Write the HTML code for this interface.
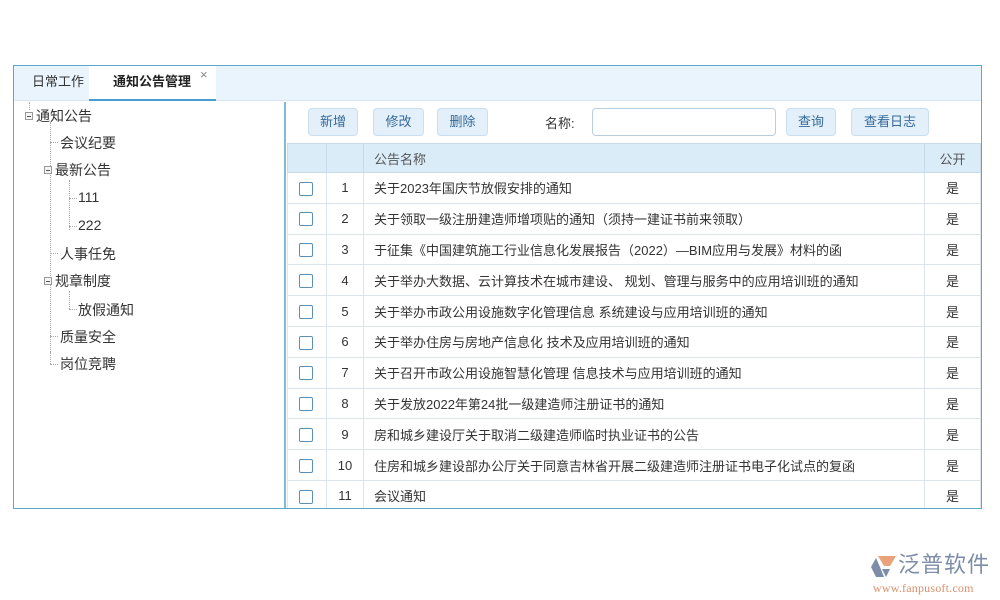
<!DOCTYPE html>
<html><head><meta charset="utf-8"><style>
*{margin:0;padding:0;box-sizing:border-box}
body{width:1000px;height:600px;background:#fff;font-family:"Liberation Sans","Noto Sans CJK SC",sans-serif;font-size:13px;color:#333;position:relative;overflow:hidden}
.box{position:absolute;left:13px;top:65px;width:969px;height:444px;border:1px solid #5aa9c9;overflow:hidden}
.tabs{position:absolute;left:0;top:0;width:967px;height:35px;background:#eaf4fc;border-bottom:1px solid #d7e6f2}
.tab{position:absolute;top:0;height:35px;line-height:31px;font-size:13px}
.t1{left:18px;color:#333}
.t2{left:75px;width:127px;background:#fff;border-bottom:2px solid #4a9bd0;padding-left:24px;color:#222;font-weight:bold;height:35px}
.t2 span{position:absolute;left:111px;top:-7px;color:#888;font-weight:normal;font-size:13px}
.tree{position:absolute;left:0;top:36px;width:272px;height:406px;border-right:2px solid #7fbbd8}
.node{position:absolute;font-size:14px;color:#333;white-space:nowrap}
.mi{display:inline-block;width:8px;height:8px;border:1px solid #999;position:relative;top:-1px;margin-right:3px;background:#f4f4f4}
.mi:after{content:"";position:absolute;left:1px;top:3px;width:4px;height:1px;background:#555}
.vl{position:absolute;border-left:1px dotted #aaa}
.hl{position:absolute;border-top:1px dotted #aaa;width:8px}
.right{position:absolute;left:273px;top:36px;width:694px;height:406px}
.btn{position:absolute;top:6px;height:28px;line-height:26px;border:1px solid #c9dff0;background:#e3eff9;border-radius:4px;color:#346a99;text-align:center;font-size:13px}
.input{position:absolute;left:305px;top:6px;width:184px;height:28px;border:1px solid #b8cfe2;border-radius:4px;background:#fff}
table{position:absolute;left:0;top:41px;width:694px;border-collapse:collapse;table-layout:fixed}
td,th{border:1px solid #dde5ec;padding:0;font-weight:normal;font-size:13px;white-space:nowrap;overflow:hidden}
th{background:#dbecf9;color:#555;border-color:#c8dcec}
td.n{text-align:center}
td.c span{display:inline-block;width:14px;height:14px;border:1px solid #5b8fb5;border-radius:2px;margin-left:11px;vertical-align:middle}
.nm{padding-left:10px}
.p{text-align:center}
tr{height:30.8px}
</style></head><body>
<div class="box">
<div class="tabs"><div class="tab t1">日常工作</div><div class="tab t2">通知公告管理<span>×</span></div></div>
<div class="tree">
<div class="vl" style="left:15px;top:0px;height:8px"></div>
<div class="node" style="left:11px;top:4px"><i class="mi"></i>通知公告</div>
<div class="vl" style="left:36px;top:20px;height:230px"></div>
<div class="hl" style="left:36px;top:40px"></div><div class="node" style="left:46px;top:31px">会议纪要</div>
<div class="node" style="left:30px;top:58px"><i class="mi"></i>最新公告</div>
<div class="vl" style="left:55px;top:78px;height:50px"></div>
<div class="hl" style="left:55px;top:96px"></div><div class="node" style="left:64px;top:87px">111</div>
<div class="hl" style="left:55px;top:124px"></div><div class="node" style="left:64px;top:115px">222</div>
<div class="hl" style="left:36px;top:151px"></div><div class="node" style="left:46px;top:142px">人事任免</div>
<div class="node" style="left:30px;top:169px"><i class="mi"></i>规章制度</div>
<div class="vl" style="left:55px;top:189px;height:18px"></div>
<div class="hl" style="left:55px;top:207px"></div><div class="node" style="left:64px;top:198px">放假通知</div>
<div class="hl" style="left:36px;top:234px"></div><div class="node" style="left:46px;top:225px">质量安全</div>
<div class="vl" style="left:36px;top:250px;height:12px"></div>
<div class="hl" style="left:36px;top:262px"></div><div class="node" style="left:46px;top:252px">岗位竞聘</div>
</div>
<div class="right">
<div class="btn" style="left:21px;width:50px">新增</div>
<div class="btn" style="left:86px;width:51px">修改</div>
<div class="btn" style="left:150px;width:51px">删除</div>
<div style="position:absolute;left:258px;top:11px">名称:</div>
<div class="input"></div>
<div class="btn" style="left:499px;width:50px">查询</div>
<div class="btn" style="left:564px;width:78px">查看日志</div>
<table>
<colgroup><col style="width:39px"><col style="width:37px"><col><col style="width:56px"></colgroup>
<tr style="height:29px"><th class="c"></th><th></th><th class="nm" style="text-align:left">公告名称</th><th class="p">公开</th></tr>
<tr><td class="c"><span></span></td><td class="n">1</td><td class="nm">关于2023年国庆节放假安排的通知</td><td class="p">是</td></tr>
<tr><td class="c"><span></span></td><td class="n">2</td><td class="nm">关于领取一级注册建造师增项贴的通知（须持一建证书前来领取）</td><td class="p">是</td></tr>
<tr><td class="c"><span></span></td><td class="n">3</td><td class="nm">于征集《中国建筑施工行业信息化发展报告（2022）—BIM应用与发展》材料的函</td><td class="p">是</td></tr>
<tr><td class="c"><span></span></td><td class="n">4</td><td class="nm">关于举办大数据、云计算技术在城市建设、 规划、管理与服务中的应用培训班的通知</td><td class="p">是</td></tr>
<tr><td class="c"><span></span></td><td class="n">5</td><td class="nm">关于举办市政公用设施数字化管理信息 系统建设与应用培训班的通知</td><td class="p">是</td></tr>
<tr><td class="c"><span></span></td><td class="n">6</td><td class="nm">关于举办住房与房地产信息化 技术及应用培训班的通知</td><td class="p">是</td></tr>
<tr><td class="c"><span></span></td><td class="n">7</td><td class="nm">关于召开市政公用设施智慧化管理 信息技术与应用培训班的通知</td><td class="p">是</td></tr>
<tr><td class="c"><span></span></td><td class="n">8</td><td class="nm">关于发放2022年第24批一级建造师注册证书的通知</td><td class="p">是</td></tr>
<tr><td class="c"><span></span></td><td class="n">9</td><td class="nm">房和城乡建设厅关于取消二级建造师临时执业证书的公告</td><td class="p">是</td></tr>
<tr><td class="c"><span></span></td><td class="n">10</td><td class="nm">住房和城乡建设部办公厅关于同意吉林省开展二级建造师注册证书电子化试点的复函</td><td class="p">是</td></tr>
<tr><td class="c"><span></span></td><td class="n">11</td><td class="nm">会议通知</td><td class="p">是</td></tr>
</table>
</div>
</div>
<svg style="position:absolute;left:870px;top:554px" width="28" height="26"><path d="M8 2 L26 2 L20 12 L14 12 Z" fill="#e9a27a"/><path d="M6 4 L1 13 L6 23 L14 23 L10 13 Z" fill="#7d8da8"/><path d="M12 15 L20 15 L16 23 Z" fill="#7d8da8"/></svg>
<div style="position:absolute;left:898px;top:551px;font-size:22px;color:#7d8da8;letter-spacing:1px;line-height:28px">泛普软件</div>
<div style="position:absolute;left:873px;top:581px;font-family:'Liberation Serif',serif;font-size:12px;color:#d9906a;letter-spacing:0.2px">www.fanpusoft.com</div>
</body></html>
